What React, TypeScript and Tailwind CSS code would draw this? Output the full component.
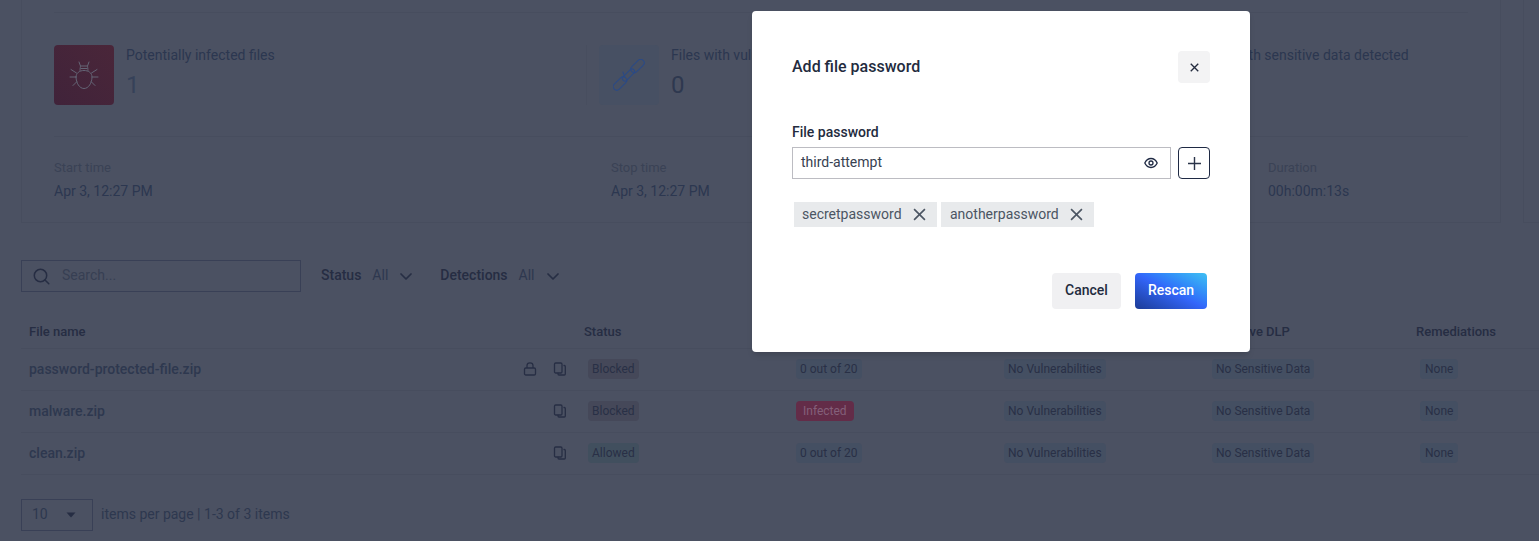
import React from "react";

const Bug = () => (
  <svg width="30" height="30" viewBox="0 0 30 30" fill="none" stroke="#646475" strokeWidth="1" strokeLinecap="round" strokeLinejoin="round">
    <path d="M7 17c0-4 3.500-6.500 8-6.500s8 2.500 8 6.500c0 6-3.500 11.500-8 11.500S7 23 7 17z" />
    <path d="M11 10.500c0-2 .5-4 .5-4.500h7c0 .5.500 2.500.500 4.500" />
    <path d="M11.500 6 10 2M18.500 6 20 2" />
    <path d="M12 8.500h6" />
    <path d="M2 9.500l5.500 3.500M28 9.500 22.500 13M1 17h6M29 17h-6M4 25.500l3.800-3.800M26 25.500l-3.800-3.800" />
  </svg>
);

const Chain = () => (
  <svg width="32" height="32" viewBox="0 0 32 32" fill="none" stroke="#2b4a85" strokeWidth="1.100" strokeLinecap="round">
    <rect x="-3.500" y="-8" width="7" height="16" rx="3.500" transform="translate(7 24.500) rotate(45)" />
    <rect x="-2.500" y="-7.500" width="5" height="15" rx="2.500" transform="translate(15.500 16) rotate(45)" />
    <rect x="-3.500" y="-8" width="7" height="16" rx="3.500" transform="translate(24.500 7) rotate(45)" />
    <path d="M10 13l1.500 4.500" />
  </svg>
);

const CopyIcon = () => (
  <svg width="14" height="14" viewBox="0 0 14 14" fill="none" stroke="#272e44" strokeWidth="1.300" strokeLinejoin="round" strokeLinecap="round">
    <rect x="1.500" y="1" width="7.500" height="10" rx="1.200" />
    <path d="M11 3.500h.3c.6 0 1 .4 1 1V12c0 .6-.4 1-1 1H6c-.6 0-1-.4-1-1v-.5" />
  </svg>
);

const LockIcon = () => (
  <svg width="14" height="14" viewBox="0 0 14 14" fill="none" stroke="#272e44" strokeWidth="1.300">
    <rect x="1.500" y="6" width="11" height="7" rx="1.300" />
    <path d="M4 6V3.500a3 2.700 0 0 1 6 0V6" />
  </svg>
);

const Chevron = () => (
  <svg width="12" height="7" viewBox="0 0 12 7" fill="none" stroke="#272e44" strokeWidth="1.700" strokeLinecap="round" strokeLinejoin="round">
    <path d="M1 1l5 5 5-5" />
  </svg>
);

const Cross = ({ size, stroke, width }: { size: number; stroke: string; width: number }) => (
  <svg width={size} height={size} viewBox="0 0 12 12" fill="none" stroke={stroke} strokeWidth={width}>
    <path d="M1 1l10 10M11 1 1 11" />
  </svg>
);

const Badge = ({ text, className }: { text: string; className: string }) => (
  <span className={`ml-1 inline-flex h-5 items-center rounded-[4px] text-xs ${className}`}>{text}</span>
);

const blue = "bg-[#444f62] text-[#293046] px-1";
const rows = [
  { name: "password-protected-file.zip", lock: true, status: "Blocked", statusClass: "bg-[#454859] text-[#293046] px-1", av: "0 out of 20", avClass: blue },
  { name: "malware.zip", lock: false, status: "Blocked", statusClass: "bg-[#454859] text-[#293046] px-1", av: "Infected", avClass: "bg-[#632c48] text-[#84607a] px-[7px]" },
  { name: "clean.zip", lock: false, status: "Allowed", statusClass: "bg-[#414f5e] text-[#293046] px-1", av: "0 out of 20", avClass: blue },
];

export default function App() {
  return (
    <div className="relative h-[541px] w-[1539px] overflow-hidden bg-[#4b5162] font-[Roboto,sans-serif] text-sm text-[#2c3750]">
      <div className="flex pl-[21px]">
        <section className="h-[223px] w-[1480px] border-x border-b border-[#474d5e] px-8 pt-3">
          <div className="grid h-[125px] grid-cols-[532px_544px_1fr] items-start border-y border-[#474d5e] pt-8">
            <div className="flex gap-3">
              <div className="flex h-[60px] w-[60px] items-center justify-center rounded-[4px] bg-gradient-to-tr from-[#40233a] to-[#4a2639]">
                <Bug />
              </div>
              <div>
                <div className="leading-5">Potentially infected files</div>
                <div className="mt-[6px] text-2xl leading-7 text-[#364159]">1</div>
              </div>
            </div>
            <div className="flex gap-3 border-l border-[#484e5f] pl-3">
              <div className="flex h-[60px] w-[60px] items-center justify-center rounded-[4px] bg-[#475063]">
                <Chain />
              </div>
              <div>
                <div className="leading-5">Files with vulnerabilities detected</div>
                <div className="mt-[6px] text-2xl leading-7 text-[#2e384f]">0</div>
              </div>
            </div>
            <div className="flex gap-3">
              <div className="h-[60px] w-[60px]" />
              <div className="leading-5">Files with sensitive data detected</div>
            </div>
          </div>
          <div className="grid grid-cols-[557px_657px_1fr] pt-[21px]">
            <div>
              <div className="text-[13px] leading-5 text-[#3a4255]">Start time</div>
              <div className="mt-[3px] leading-5">Apr 3, 12:27 PM</div>
            </div>
            <div>
              <div className="text-[13px] leading-5 text-[#3a4255]">Stop time</div>
              <div className="mt-[3px] leading-5">Apr 3, 12:27 PM</div>
            </div>
            <div>
              <div className="text-[13px] leading-5 text-[#3a4255]">Duration</div>
              <div className="mt-[3px] leading-5">00h:00m:13s</div>
            </div>
          </div>
        </section>
        <section className="ml-[22px] h-[223px] flex-1 border-b border-l border-[#474d5e]" />
      </div>

      <div className="ml-[21px] mt-[37px] flex h-8 items-center">
        <div className="flex h-8 w-[280px] items-center gap-[12px] border border-[#394056] pl-[11px]">
          <svg width="17" height="17" viewBox="0 0 17 17" fill="none" stroke="#262d43" strokeWidth="1.500" strokeLinecap="round">
            <circle cx="7.500" cy="7.500" r="6.200" />
            <path d="M12 12l3.800 3.800" />
          </svg>
          <span className="-mt-[2px] text-[#373f53]">Search...</span>
        </div>
        <span className="-mt-[2px] ml-5 font-medium text-[#262d43]">Status</span>
        <span className="-mt-[2px] ml-[11px] text-[#2e384f]">All</span>
        <span className="ml-3"><Chevron /></span>
        <span className="-mt-[2px] ml-[28px] font-medium text-[#262d43]">Detections</span>
        <span className="-mt-[2px] ml-[11px] text-[#2e384f]">All</span>
        <span className="ml-3"><Chevron /></span>
      </div>

      <div className="ml-[21px]">
        <div className="mt-[22px] grid h-[35px] grid-cols-[555px_208px_208px_208px_208px_1fr] items-center border-b border-[#474d5e] pt-[3px] text-[13px] font-medium text-[#262d43]">
          <div className="pl-2">File name</div>
          <div className="pl-2">Status</div>
          <div className="pl-2">Multiscanning</div>
          <div className="pl-2">Vulnerabilities</div>
          <div className="pl-2">Proactive DLP</div>
          <div className="pl-2">Remediations</div>
        </div>
        {rows.map((r) => (
          <div key={r.name} className="grid h-[42px] grid-cols-[555px_208px_208px_208px_208px_1fr] items-center border-b border-[#474d5e] pb-[2px]">
            <div className="flex items-center pl-2 pr-[9px]">
              <span className="flex-1 font-medium text-[#2e384f]">{r.name}</span>
              {r.lock && <span className="mr-4 flex"><LockIcon /></span>}
              <span className="flex"><CopyIcon /></span>
            </div>
            <div className="pl-2"><Badge text={r.status} className={r.statusClass} /></div>
            <div className="pl-2"><Badge text={r.av} className={r.avClass} /></div>
            <div className="pl-2"><Badge text="No Vulnerabilities" className={blue} /></div>
            <div className="pl-2"><Badge text="No Sensitive Data" className={blue} /></div>
            <div className="pl-2"><Badge text="None" className="bg-[#444f62] text-[#293046] px-[5px]" /></div>
          </div>
        ))}
      </div>

      <div className="ml-[21px] mt-6 flex items-center">
        <div className="flex h-8 w-[72px] items-center border border-[#394056] pl-[10px] text-[#2e384f]">
          <span className="-mt-[2px]">10</span>
          <svg className="ml-[18px]" width="10" height="6" viewBox="0 0 10 6" fill="#262d43"><path d="M0.500 0.500h9L5 5.500z" /></svg>
        </div>
        <span className="-mt-[2px] ml-2 text-[#2e384f]">items per page | 1-3 of 3 items</span>
      </div>

      <div className="absolute left-[752px] top-[11px] h-[341px] w-[498px] rounded-[4px] bg-white px-10 pt-10 text-[#1f2a44] shadow-md">
        <div className="flex items-center justify-between">
          <h2 className="text-base font-medium text-[#232b3e]">Add file password</h2>
          <button className="flex h-8 w-8 items-center justify-center rounded-[4px] bg-[#f3f3f4]">
            <Cross size={9} stroke="#232b3e" width={1.800} />
          </button>
        </div>
        <label className="mt-[40px] block text-sm font-medium leading-[18px] text-[#232b3e]">File password</label>
        <div className="mt-[6px] flex gap-[7px]">
          <div className="flex h-8 w-[379px] items-center justify-between border border-[#bcbcc2] pl-2 pr-[12px] text-[#374151]">
            <span className="-mt-[2px]">third-attempt</span>
            <svg width="14" height="12" viewBox="0 0 14 12" fill="none" stroke="#1f2a44" strokeWidth="1.300">
              <path d="M.8 6C2.200 3 4.400 1.500 7 1.500S11.800 3 13.200 6C11.800 9 9.600 10.500 7 10.500S2.200 9 .8 6z" />
              <circle cx="7" cy="6" r="2" />
            </svg>
          </div>
          <button className="flex h-8 w-8 items-center justify-center rounded-[4px] border border-[#1f2a44]">
            <svg width="13" height="13" viewBox="0 0 13 13" stroke="#2a3449" strokeWidth="1.400"><path d="M6.500 0v13M0 6.500h13" /></svg>
          </button>
        </div>
        <div className="ml-[2px] mt-[23px] flex gap-1">
          <span className="flex h-[25px] w-[143px] items-center gap-[11px] bg-[#e8eaec] pl-2 text-[#4b5563]">
            <span className="-mt-[1px]">secretpassword</span>
            <Cross size={13} stroke="#4b5563" width={1.500} />
          </span>
          <span className="flex h-[25px] w-[153px] items-center gap-[11px] bg-[#e8eaec] pl-[9px] text-[#4b5563]">
            <span className="-mt-[1px]">anotherpassword</span>
            <Cross size={13} stroke="#4b5563" width={1.500} />
          </span>
        </div>
        <div className="mr-[3px] mt-[46px] flex justify-end gap-[14px]">
          <button className="h-9 w-[69px] rounded-[4px] bg-[#f0f0f2] pb-[2px] font-medium text-[#232b3e]">Cancel</button>
          <button className="h-9 w-[72px] rounded-[4px] bg-gradient-to-tr from-[#1c3c96] via-[#3366fa] to-[#41c0f2] pb-[2px] font-medium text-white">Rescan</button>
        </div>
      </div>
    </div>
  );
}
